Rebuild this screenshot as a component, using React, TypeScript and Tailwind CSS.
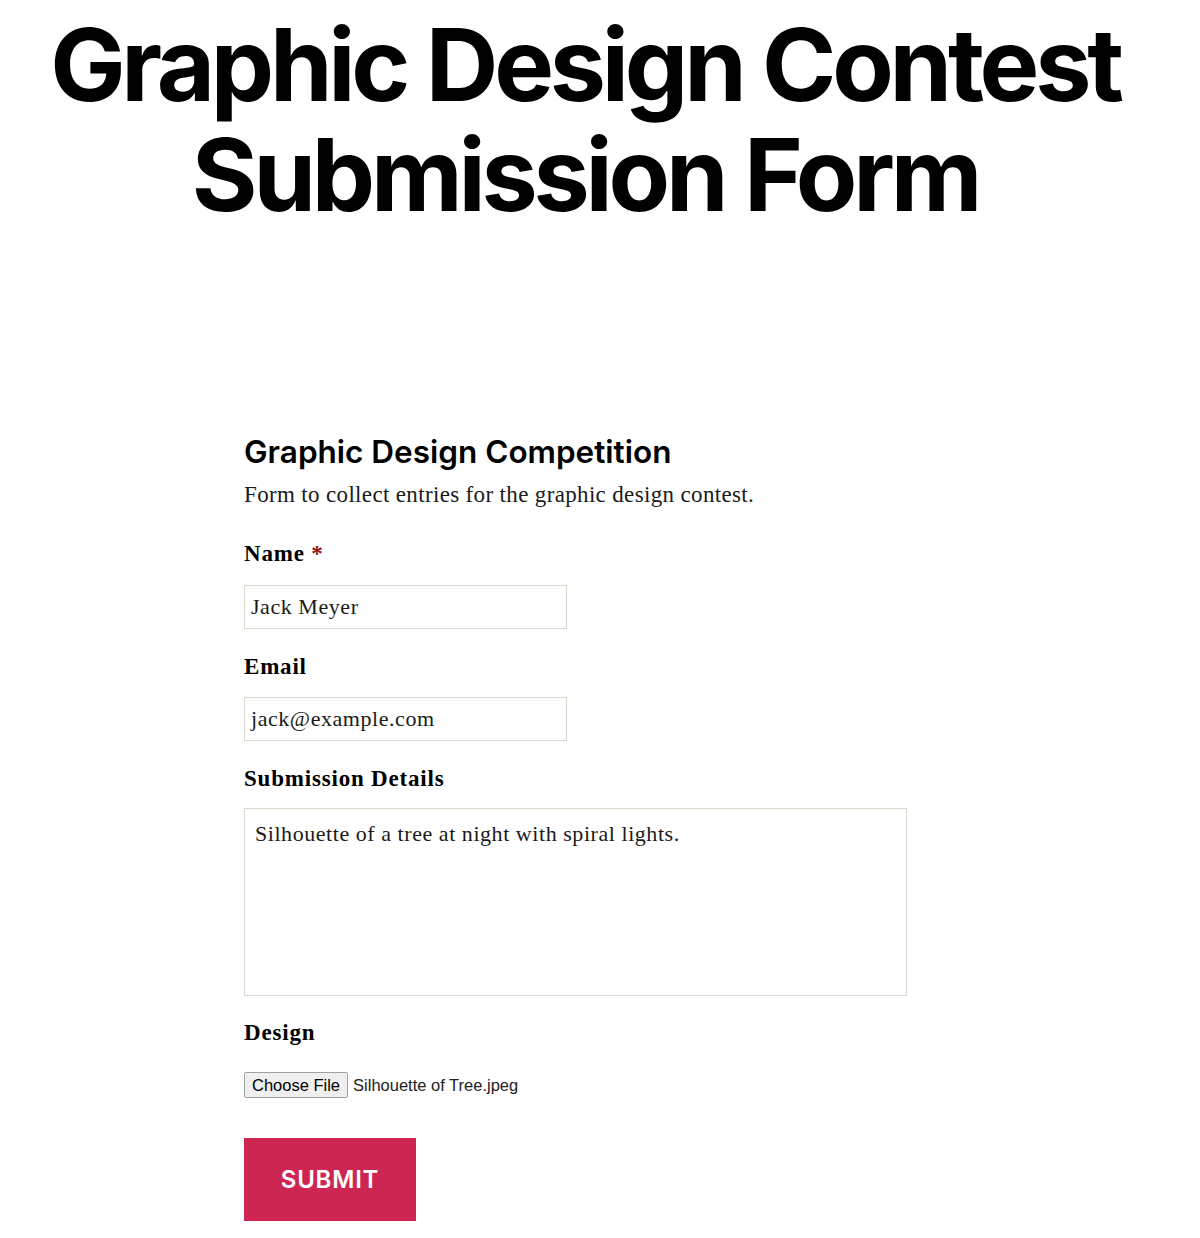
import React from "react";

const serif = "font-['Liberation_Serif','Times_New_Roman',serif]";
const labelCls = "block text-[23px] font-bold leading-[30px] tracking-[0.035em]";
const inputCls =
  "h-[44px] w-[323px] border border-[#dcd7ca] px-[6px] text-[22px] leading-[42px] tracking-[0.025em] text-[#1a1a1a]";

export default function App() {
  return (
    <div className="min-h-[1238px] bg-white text-black">
      <div className="pt-[10px] pr-[30px]">
        <h1 className="text-center font-['Inter',sans-serif] font-bold text-[100.5px] leading-[110px] tracking-[-0.042em]">
          Graphic Design Contest
          <br />
          Submission Form
        </h1>
      </div>
      <div className={`ml-[244px] mt-[203px] w-[663px] ${serif}`}>
        <h2 className="font-['Inter',sans-serif] font-semibold text-[31.5px] leading-[38px]">
          Graphic Design Competition
        </h2>
        <p className="mt-[9px] text-[23px] leading-[30px] tracking-[0.015em] text-[#1a1a1a]">
          Form to collect entries for the graphic design contest.
        </p>
        <label className={`mt-[29px] ${labelCls}`}>
          Name <span className="text-[#8f1313]">*</span>
        </label>
        <div className={`mt-[16px] ${inputCls}`}>Jack Meyer</div>
        <label className={`mt-[23px] ${labelCls}`}>Email</label>
        <div className={`mt-[15px] ${inputCls}`}>jack@example.com</div>
        <label className={`mt-[23px] ${labelCls}`}>Submission Details</label>
        <div className="mt-[14px] h-[188px] w-[663px] border border-[#dcd7ca] px-[10px] pt-[10px] text-[22px] leading-[30px] tracking-[0.025em] text-[#1a1a1a]">
          Silhouette of a tree at night with spiral lights.
        </div>
        <label className={`mt-[22px] ${labelCls}`}>Design</label>
        <div className="mt-[24px] flex items-center font-['Liberation_Sans',Arial,sans-serif] text-[16.5px] text-[#222]">
          <span className="flex h-[26px] items-center rounded-[2px] border border-[#a0a0a0] bg-[#efefef] px-[7px] text-black">
            Choose File
          </span>
          <span className="ml-[5px]">Silhouette of Tree.jpeg</span>
        </div>
        <div className="mt-[40px] flex h-[83px] w-[172px] items-center justify-center bg-[#cd2653] font-['Inter',sans-serif] text-[24px] font-semibold uppercase tracking-[0.0333em] text-white">
          Submit
        </div>
      </div>
    </div>
  );
}
